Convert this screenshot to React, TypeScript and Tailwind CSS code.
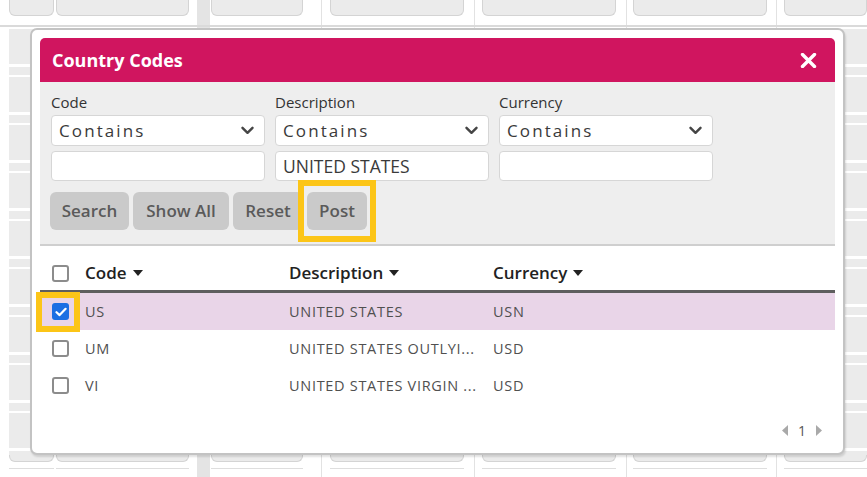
import React from "react";

type Cell = { kind: "box" | "bar" | "line"; cls: string };

// Column layout of the grid page behind the dialog
const cells: Cell[] = [
  { kind: "box", cls: "ml-[9px] w-[45px]" },
  { kind: "box", cls: "ml-[2px] w-[133px]" },
  { kind: "bar", cls: "ml-[8px] w-[13px]" },
  { kind: "box", cls: "ml-[1px] w-[92px]" },
  { kind: "line", cls: "ml-[18px] w-[1px]" },
  { kind: "box", cls: "ml-[8px] w-[134px]" },
  { kind: "line", cls: "ml-[10px] w-[1px]" },
  { kind: "box", cls: "ml-[7px] w-[134px]" },
  { kind: "line", cls: "ml-[10px] w-[1px]" },
  { kind: "box", cls: "ml-[6px] w-[134px]" },
  { kind: "line", cls: "ml-[9px] w-[1px]" },
  { kind: "box", cls: "ml-[7px] w-[83px]" },
];

function GridRow({ variant }: { variant: "top" | "mid" | "bottom" }) {
  const rowCls =
    variant === "top"
      ? "h-[27px] border-b-2 border-[#dadada]"
      : variant === "mid"
      ? "h-[48px]"
      : "h-[22px]";
  return (
    <div className={`flex shrink-0 ${rowCls}`}>
      {cells.map((c, i) => {
        if (c.kind === "bar") return <div key={i} className={`${c.cls} h-full bg-[#e4e4e4]`} />;
        if (c.kind === "line") return <div key={i} className={`${c.cls} h-full bg-[#e2e2e2]`} />;
        if (variant === "top")
          return (
            <div key={i} className={`${c.cls} h-[16px] bg-[#ebebeb] border border-t-0 border-[#d4d4d4] rounded-b-[6px]`} />
          );
        if (variant === "bottom")
          return (
            <div key={i} className={`${c.cls} flex flex-col`}>
              <div className="h-[7px] bg-[#ebebeb] border border-t-0 border-[#d4d4d4] rounded-b-[6px]" />
              <div className="h-[7px] border-b border-[#dedede]" />
            </div>
          );
        return (
          <div key={i} className={`${c.cls} h-full flex flex-col`}>
            <div className="h-[2px] bg-white" />
            <div className="flex-1 bg-[#ebebeb]" />
            <div className="h-[3px] bg-white" />
            <div className="h-[8px] bg-[#ebebeb]" />
          </div>
        );
      })}
    </div>
  );
}

function Chevron() {
  return (
    <svg width="13" height="9" viewBox="0 0 13 9" fill="none">
      <path d="M1.5 1.8 L6.5 6.8 L11.5 1.8" stroke="#454545" strokeWidth="2.4" strokeLinecap="round" strokeLinejoin="round" />
    </svg>
  );
}

function Caret() {
  return (
    <svg width="10" height="6" viewBox="0 0 10 6" className="ml-[6px]">
      <polygon points="0,0 10,0 5,6" fill="#222" />
    </svg>
  );
}

function Checkbox({ checked = false }: { checked?: boolean }) {
  if (checked)
    return (
      <div className="w-[17px] h-[17px] rounded-[3px] bg-[#1c6fe3] flex items-center justify-center">
        <svg width="12" height="10" viewBox="0 0 12 10" fill="none">
          <path d="M1.5 5.2 L4.6 8.1 L10.6 1.8" stroke="white" strokeWidth="2.2" strokeLinecap="round" strokeLinejoin="round" />
        </svg>
      </div>
    );
  return <div className="w-[17px] h-[17px] rounded-[3px] border-2 border-[#8c8c8c] bg-white" />;
}

function FilterColumn({ label, value }: { label: string; value: string }) {
  return (
    <div className="flex flex-col">
      <div className="text-[15px] leading-[16px] text-[#333]">{label}</div>
      <div className="mt-[5px] h-[31px] bg-white border border-[#d6d6d6] rounded-[4px] flex items-center justify-between pl-[7px] pr-[10px]">
        <span className="text-[17px] tracking-[2.1px] text-[#3a3a3a]">Contains</span>
        <Chevron />
      </div>
      <div className="mt-[5px] h-[30px] bg-white border border-[#d6d6d6] rounded-[4px] flex items-center pl-[7px]">
        <span className="text-[17.5px] text-[#3a3a3a]">{value}</span>
      </div>
    </div>
  );
}

// descriptions as the grid shows them, already shortened to the column width
const rows = [
  { code: "US", desc: "UNITED STATES", cur: "USN", selected: true },
  { code: "UM", desc: "UNITED STATES OUTLYI...", cur: "USD", selected: false },
  { code: "VI", desc: "UNITED STATES VIRGIN ...", cur: "USD", selected: false },
];

export default function App() {
  return (
    <div className="relative w-[867px] h-[477px] bg-white overflow-hidden font-['Open_Sans',sans-serif]">
      {/* page grid */}
      <div className="flex flex-col h-full">
        <GridRow variant="top" />
        <div className="h-[428px] overflow-hidden flex flex-col">
          {Array.from({ length: 9 }).map((_, i) => (
            <GridRow key={i} variant="mid" />
          ))}
        </div>
        <GridRow variant="bottom" />
      </div>

      {/* dialog */}
      <div className="absolute left-[30px] top-[28px] w-[815px] h-[427px] bg-white border-2 border-[#c3c3c3] rounded-[7px] p-[8px] shadow-[1px_2px_2px_rgba(0,0,0,0.12)]">
        <div className="flex flex-col h-full">
          <div className="h-[44px] shrink-0 bg-[#d0155f] rounded-t-[5px] flex items-center justify-between pl-[12px] pr-[18px]">
            <span className="text-[18px] font-bold text-white">Country Codes</span>
            <svg width="17" height="15" viewBox="0 0 17 15">
              <path d="M2.5 1.5 L14.5 13.5 M14.5 1.5 L2.5 13.5" stroke="white" strokeWidth="3.4" strokeLinecap="round" />
            </svg>
          </div>

          <div className="bg-[#eeeeee] pt-[12px] pb-[14px] border-b-2 border-[#cfcfcf]">
            <div className="grid grid-cols-[214px_214px_214px] gap-x-[10px] pl-[11px]">
              <FilterColumn label="Code" value="" />
              <FilterColumn label="Description" value="UNITED STATES" />
              <FilterColumn label="Currency" value="" />
            </div>
            <div className="mt-[11px] pl-[10px] flex gap-[4px]">
              <button className="w-[79px] h-[38px] rounded-[6px] bg-[#cacaca] text-[17px] font-semibold text-[#5a5a5a]">Search</button>
              <button className="w-[96px] h-[38px] rounded-[6px] bg-[#cacaca] text-[17px] font-semibold text-[#5a5a5a]">Show All</button>
              <button className="w-[70px] h-[38px] rounded-[6px] bg-[#cacaca] text-[17px] font-semibold text-[#5a5a5a]">Reset</button>
              <div className="relative">
                <button className="w-[60px] h-[38px] rounded-[6px] bg-[#cacaca] text-[17px] font-semibold text-[#5a5a5a]">Post</button>
                <div className="absolute -left-[9px] -top-[12px] w-[78px] h-[62px] border-[6px] border-[#fcc517]" />
              </div>
            </div>
          </div>

          <div className="pt-[10px]">
            <div className="h-[37px] flex items-center pl-[12px] border-b-[3px] border-[#5e5e5e]">
              <div className="w-[33px]">
                <Checkbox />
              </div>
              <div className="w-[204px] flex items-center text-[17px] font-semibold text-[#222]">
                Code
                <Caret />
              </div>
              <div className="w-[204px] flex items-center text-[17px] font-semibold text-[#222]">
                Description
                <Caret />
              </div>
              <div className="flex items-center text-[17px] font-semibold text-[#222]">
                Currency
                <Caret />
              </div>
            </div>
            {rows.map((r) => (
              <div
                key={r.code}
                className={`relative h-[37px] flex items-center pl-[12px] text-[14.5px] tracking-[0.7px] text-[#505050] ${
                  r.selected ? "bg-[#e9d5e8]" : ""
                }`}
              >
                <div className="w-[33px]">
                  <Checkbox checked={r.selected} />
                </div>
                <div className="w-[204px]">{r.code}</div>
                <div className="w-[204px] whitespace-nowrap">{r.desc}</div>
                <div>{r.cur}</div>
                {r.selected && (
                  <div className="absolute -left-[4px] -top-[1px] w-[44px] h-[40px] border-[6px] border-[#fcc517]" />
                )}
              </div>
            ))}
          </div>

          <div className="mt-auto h-[16px] mb-[7px] pr-[13px] flex items-center justify-end gap-[10px]">
            <svg width="6" height="11" viewBox="0 0 6 11">
              <polygon points="6,0 6,11 0,5.5" fill="#a9a9a9" />
            </svg>
            <span className="text-[14px] text-[#555]">1</span>
            <svg width="6" height="11" viewBox="0 0 6 11">
              <polygon points="0,0 0,11 6,5.5" fill="#a9a9a9" />
            </svg>
          </div>
        </div>
      </div>
    </div>
  );
}
